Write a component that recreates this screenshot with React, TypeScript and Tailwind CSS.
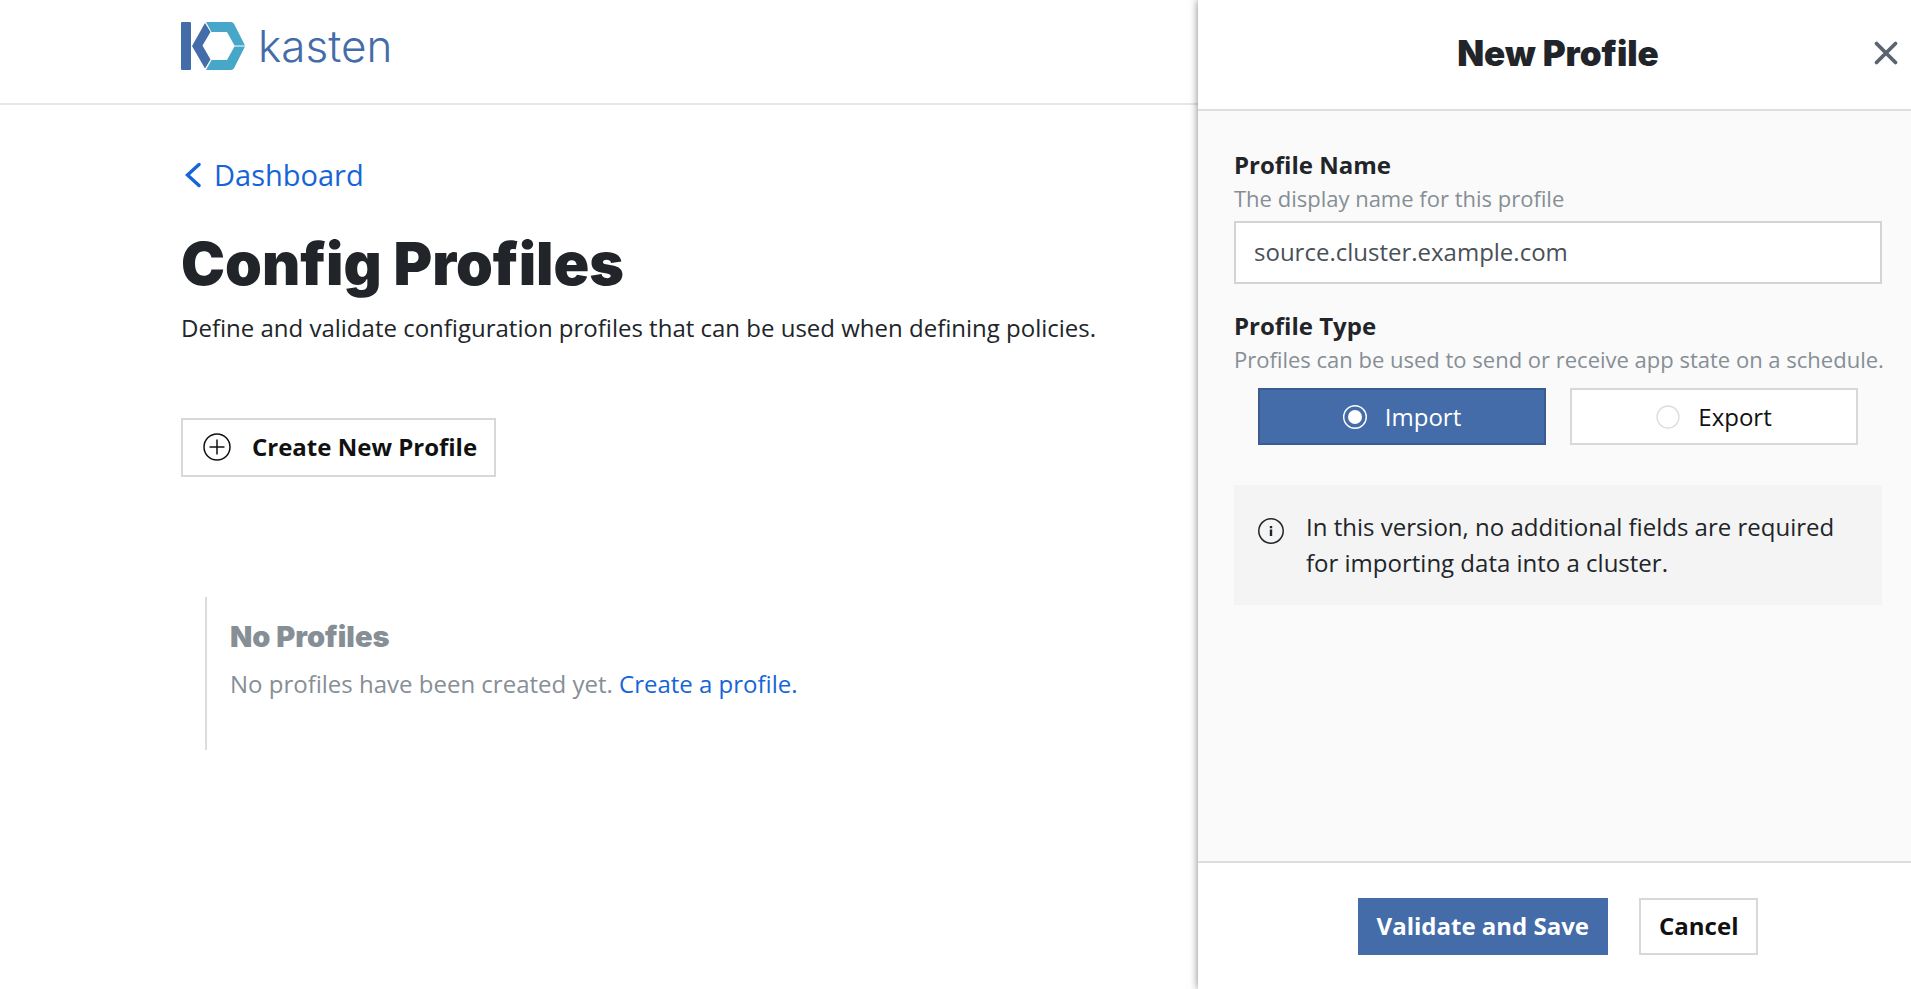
import { useState } from "react";

function KastenMark() {
  return (
    <svg width="65" height="48" viewBox="0 0 65 48" aria-hidden="true">
      <rect x="0" y="0" width="10" height="48" rx="1" fill="#446ca9" />
      <path d="M24 1 L29.500 10 L21.500 23.500 L29.500 37.500 L24 46.500 L11 24 Z" fill="#446ca9" />
      <path d="M25 0 H50 Q52 0 53 1.800 L64 23.400 H53.500 L46 10 H30.500 Z" fill="#46a7c8" />
      <path d="M25 48 H50 Q52 48 53 46.200 L64 24.400 H53.500 L46 38 H30.500 Z" fill="#46a7c8" />
    </svg>
  );
}

function RadioDot({ checked }: { checked: boolean }) {
  return checked ? (
    <svg width="24" height="24" viewBox="0 0 24 24" aria-hidden="true">
      <circle cx="12" cy="12" r="11.300" fill="none" stroke="#fff" strokeWidth="1.400" />
      <circle cx="12" cy="12" r="7" fill="#fff" />
    </svg>
  ) : (
    <svg width="24" height="24" viewBox="0 0 24 24" aria-hidden="true">
      <circle cx="12" cy="12" r="11" fill="#fff" stroke="#dedede" strokeWidth="1.400" />
    </svg>
  );
}

function TypeOption({ label, checked, onSelect }: { label: string; checked: boolean; onSelect: () => void }) {
  return (
    <label
      className={
        checked
          ? "flex h-[57px] flex-1 cursor-pointer items-center justify-center gap-[18px] border-2 border-[#3a5c92] bg-[#446ca9] text-white"
          : "flex h-[57px] flex-1 cursor-pointer items-center justify-center gap-[18px] border-2 border-[#d8d8d8] bg-white text-[#111]"
      }
    >
      <input type="radio" name="profile-type" className="sr-only" checked={checked} onChange={onSelect} />
      <RadioDot checked={checked} />
      {label}
    </label>
  );
}

export default function App() {
  const [type, setType] = useState("Import");
  const [name, setName] = useState("source.cluster.example.com");

  return (
    <div className="flex min-h-screen bg-white font-['Open_Sans',sans-serif] text-2xl leading-9 text-[#212529]">
      <div className="min-w-0 flex-1">
        <header className="flex h-[105px] items-start border-b-2 border-[#e6e6e6] pt-[22px] pl-[181px]">
          <a href="#home" className="flex items-center gap-3" aria-label="kasten">
            <KastenMark />
            <span className="font-['Inter',sans-serif] text-[44px] leading-[48px] font-light text-[#446ca9]">kasten</span>
          </a>
        </header>
        <main className="pt-[52px] pl-[181px]">
          <a href="#dashboard" className="flex items-center gap-3 pl-1 text-[29px] text-[#1665d8]">
            <svg width="17" height="26" viewBox="0 0 17 26" fill="none" stroke="currentColor" strokeWidth="3.400" strokeLinecap="round" aria-hidden="true">
              <path d="M14 2.500 L2.500 13 L14 23.500" />
            </svg>
            Dashboard
          </a>
          <h1 className="mt-[31px] font-['Inter',sans-serif] text-[59px] leading-[80px] font-black">Config Profiles</h1>
          <p className="mt-[6px]">Define and validate configuration profiles that can be used when defining policies.</p>
          <button
            type="button"
            className="mt-[72px] flex h-[59px] items-center gap-[21px] border-2 border-[#d8d8d8] bg-white pr-[17px] pb-[2px] pl-5 font-bold text-[#111]"
          >
            <svg width="28" height="28" viewBox="0 0 28 28" fill="none" stroke="currentColor" strokeWidth="1.500" aria-hidden="true">
              <circle cx="14" cy="14" r="13" />
              <path d="M14 6.500 V21.500 M6.500 14 H21.500" />
            </svg>
            Create New Profile
          </button>
          <section className="mt-[120px] ml-6 h-[153px] border-l-2 border-[#dcdcdc] pt-5 pl-[23px] text-[#868e96]">
            <h2 className="font-['Inter',sans-serif] text-[29px] leading-[40px] font-black">No Profiles</h2>
            <p className="mt-[9px]">
              No profiles have been created yet.{" "}
              <a href="#create" className="text-[#1665d8]">
                Create a profile.
              </a>
            </p>
          </section>
        </main>
      </div>

      <aside className="z-10 flex w-[713px] shrink-0 flex-col bg-[#fafafa] shadow-[0_0_8px_rgba(0,0,0,0.5)]">
        <header className="grid h-[111px] grid-cols-[1fr_auto_1fr] items-center border-b-2 border-[#dedede] bg-white pr-3 pb-[3px] pl-[19px]">
          <h2 className="col-start-2 font-['Inter',sans-serif] text-[35px] leading-[48px] font-black">New Profile</h2>
          <button type="button" aria-label="Close" className="justify-self-end text-[#5a6570]">
            <svg width="26" height="26" viewBox="0 0 26 26" fill="none" stroke="currentColor" strokeWidth="3.800" strokeLinecap="round" aria-hidden="true">
              <path d="M3.500 3.500 L22.500 22.500 M22.500 3.500 L3.500 22.500" />
            </svg>
          </button>
        </header>
        <form id="profile" className="flex-1 pt-9 pr-[29px] pl-9">
          <label htmlFor="profile-name" className="block font-bold">
            Profile Name
          </label>
          <p className="text-[22px] leading-[30px] text-[#868e96]">The display name for this profile</p>
          <input
            id="profile-name"
            type="text"
            value={name}
            onChange={(e) => setName(e.target.value)}
            className="mt-2 block h-[63px] w-full border-2 border-[#d4d4d4] bg-white px-[18px] pb-[2px] text-[#495057] outline-none"
          />
          <fieldset className="mt-6 min-w-0">
            <legend className="font-bold">Profile Type</legend>
            <p className="text-[22px] leading-[30px] whitespace-nowrap text-[#868e96]">
              Profiles can be used to send or receive app state on a schedule.
            </p>
            <div className="mt-[14px] flex gap-6 px-6">
              <TypeOption label="Import" checked={type === "Import"} onSelect={() => setType("Import")} />
              <TypeOption label="Export" checked={type === "Export"} onSelect={() => setType("Export")} />
            </div>
          </fieldset>
          <div className="mt-10 flex gap-[22px] bg-[#f4f4f4] p-6">
            <svg width="26" height="26" viewBox="0 0 26 26" fill="none" stroke="currentColor" strokeWidth="1.500" className="mt-[9px] shrink-0" aria-hidden="true">
              <circle cx="13" cy="13" r="12.200" />
              <path d="M13 8 V10.300 M13 11.500 V18" strokeWidth="2.400" />
            </svg>
            <p>In this version, no additional fields are required for importing data into a cluster.</p>
          </div>
        </form>
        <footer className="flex h-[128px] items-center justify-center gap-[31px] border-t-2 border-[#dedede] bg-white pr-[29px] pl-9 font-bold">
          <button type="submit" form="profile" className="h-[57px] bg-[#446ca9] px-[19px] text-white">
            Validate and Save
          </button>
          <button type="button" className="h-[57px] border-2 border-[#d8d8d8] bg-white px-[18px] text-[#111]">
            Cancel
          </button>
        </footer>
      </aside>
    </div>
  );
}
